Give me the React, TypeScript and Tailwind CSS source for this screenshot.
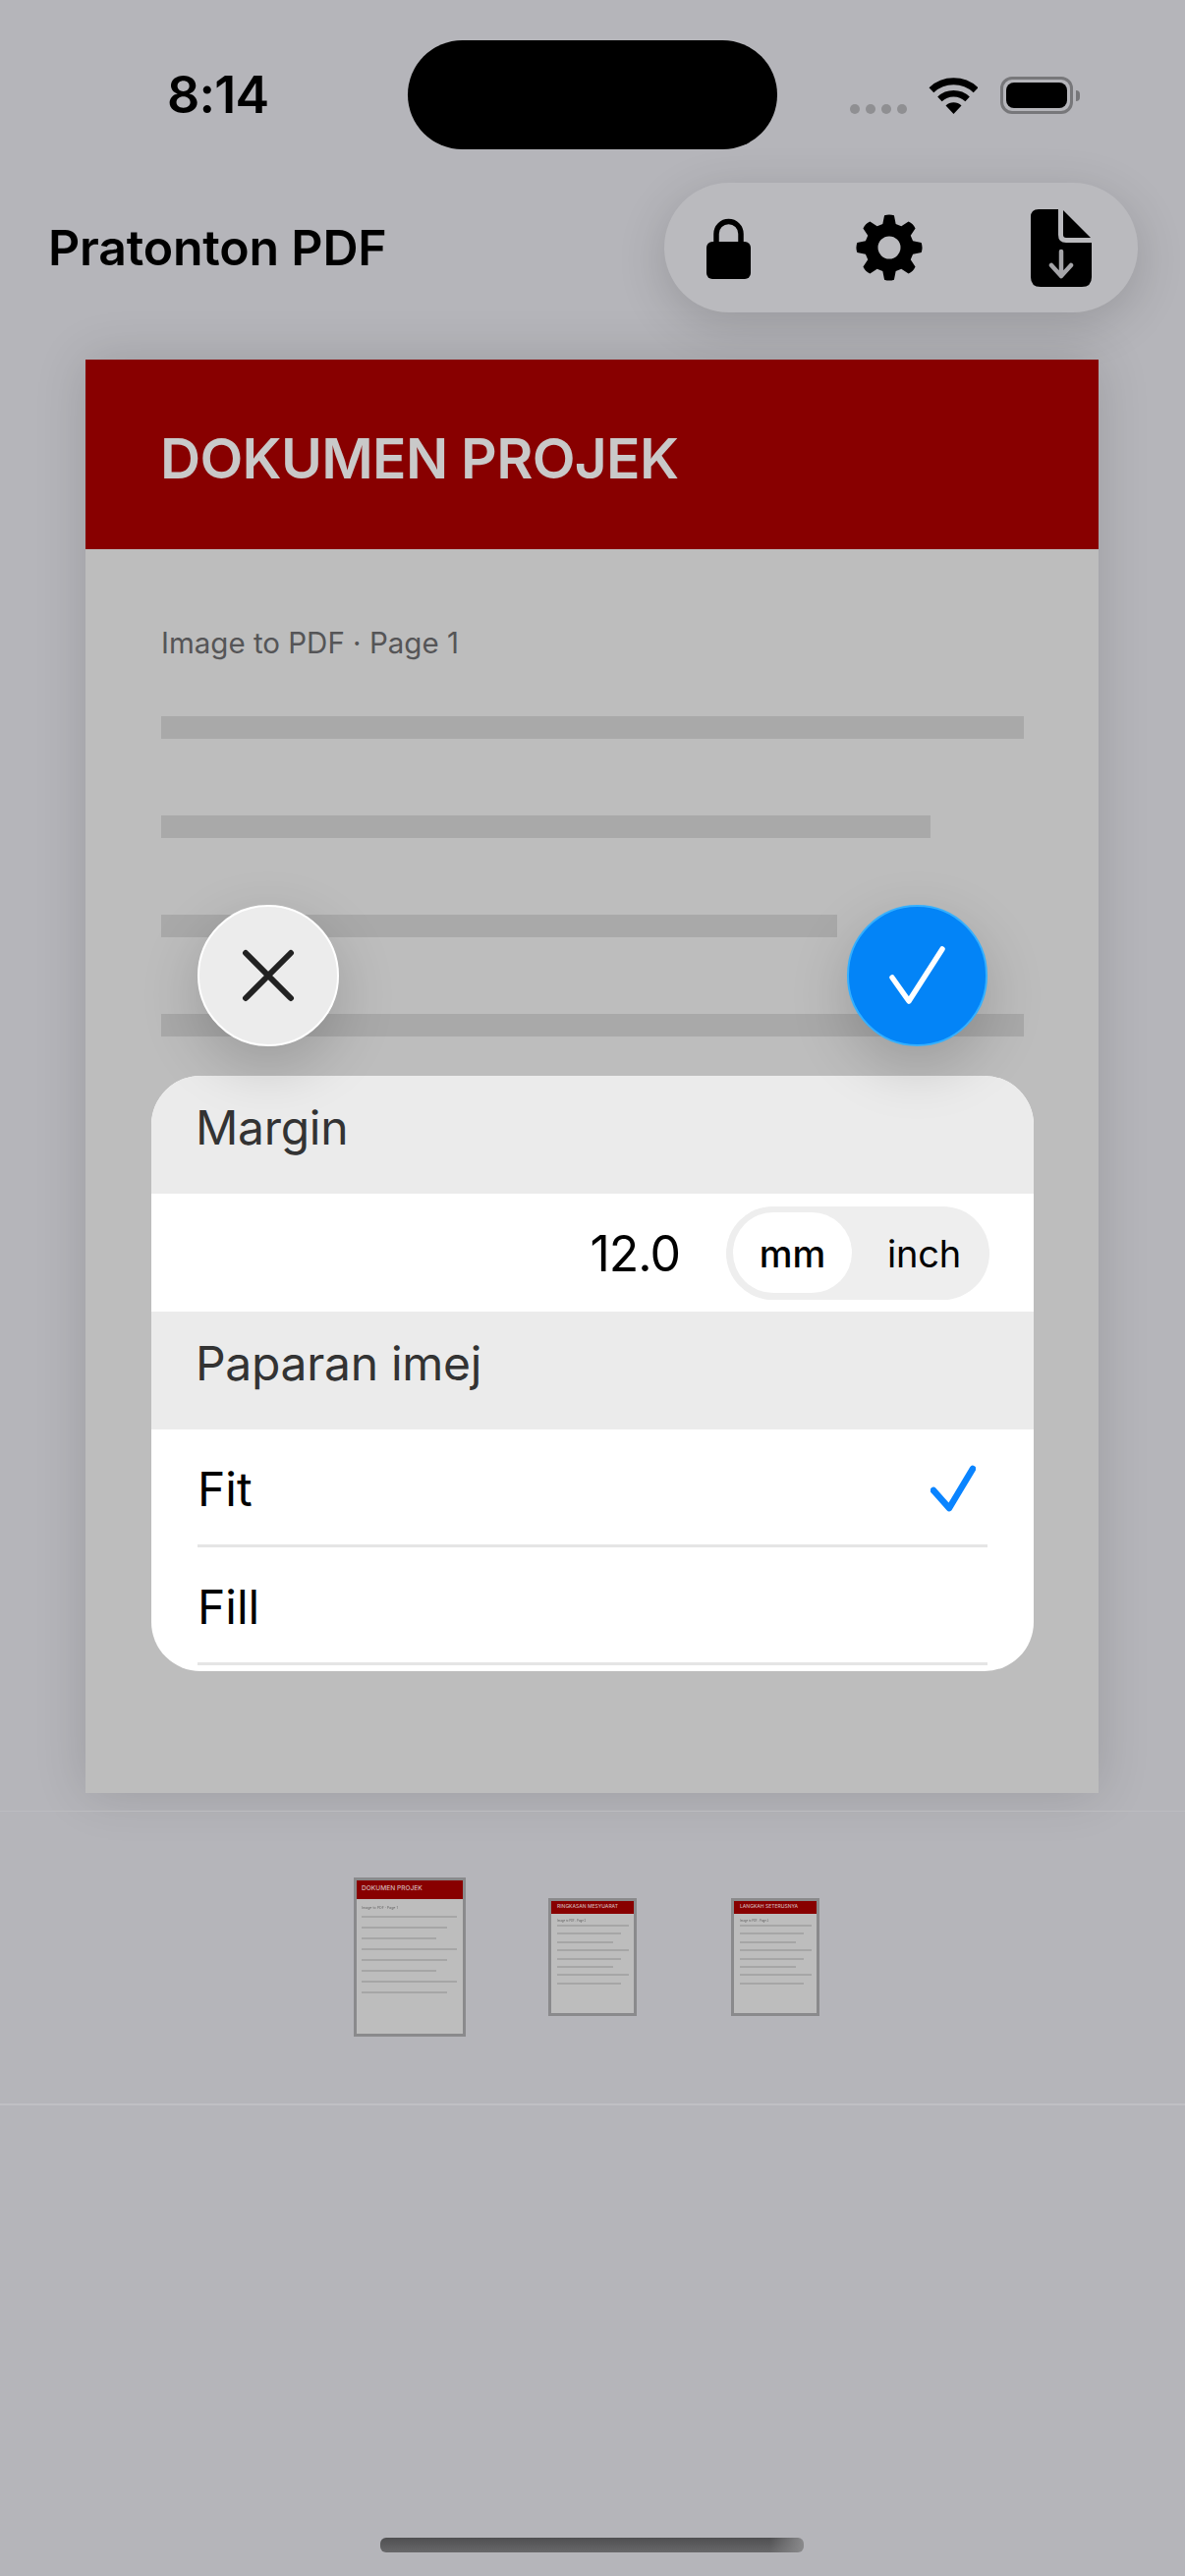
const gearPath = (() => {
  const cx = 34, cy = 34, teeth = 8;
  const pts: string[] = [];
  for (let i = 0; i < teeth; i++) {
    const a = (i * 2 * Math.PI) / teeth - Math.PI / 2;
    const p = (r: number, d: number) => {
      const t = a + d;
      return `${(cx + r * Math.cos(t)).toFixed(2)} ${(cy + r * Math.sin(t)).toFixed(2)}`;
    };
    pts.push(`${i === 0 ? "M" : "L"}${p(25, -0.27)}`, `L${p(33, -0.15)}`, `Q${p(34.5, 0)} ${p(33, 0.15)}`, `L${p(25, 0.27)}`);
  }
  return pts.join(" ") + " Z M34 22.5 A11.5 11.5 0 1 0 34 45.5 A11.5 11.5 0 1 0 34 22.5 Z";
})();

function Thumb({ outer, title, label, big }: { outer: string; title: string; label: string; big: boolean }) {
  const widths = big ? [97, 87, 76, 97, 87, 76, 97, 87] : [73, 65, 57, 73, 65, 57, 73, 65];
  return (
    <div className={`${outer} shrink-0 border-[3px] border-[#8a8a8c] bg-[#bdbdbd] flex flex-col`}>
      <div className={big ? "h-[19px] bg-[#880000] flex items-center pl-[5px]" : "h-[13px] bg-[#880000] flex items-center pl-[6px]"}>
        <span className={big ? "text-[6.6px] font-medium text-[#d0b4b4] whitespace-nowrap" : "text-[5px] font-medium text-[#d0b4b4] whitespace-nowrap"}>{title}</span>
      </div>
      <div className={big ? "pl-[5px] pt-[7px] flex flex-col blur-[0.4px]" : "pl-[6px] pt-[5px] flex flex-col blur-[0.4px]"}>
        <span className={big ? "text-[3.6px] leading-[5px] text-[#666] mb-[5px] whitespace-nowrap" : "text-[2.8px] leading-[4px] text-[#666] mb-[2.5px] whitespace-nowrap"}>{label}</span>
        <div className={big ? "flex flex-col gap-[9px]" : "flex flex-col gap-[6.4px]"}>
          {widths.map((w, i) => (
            <div key={i} className="h-[2px] bg-[#a6a6a6]" style={{ width: w }} />
          ))}
        </div>
      </div>
    </div>
  );
}

export default function App() {
  return (
    <div className="relative w-[1206px] h-[2622px] overflow-hidden bg-[#b5b5ba] font-['Inter',sans-serif] text-black flex flex-col">
      {/* status bar */}
      <div className="h-[186px] shrink-0 flex items-start">
        <span className="ml-[170px] mt-[66px] w-[245px] text-[52px] leading-[62px] font-semibold tracking-[-0.8px]">8:14</span>
        <div className="mt-[41px] w-[376px] h-[111px] rounded-[56px] bg-black" />
        <div className="ml-[74px] mt-[78px] flex items-start">
          <div className="mt-[28px] flex gap-[6px]">
            <div className="w-[10px] h-[10px] rounded-full bg-[#8f8f92]" />
            <div className="w-[10px] h-[10px] rounded-full bg-[#8f8f92]" />
            <div className="w-[10px] h-[10px] rounded-full bg-[#8f8f92]" />
            <div className="w-[10px] h-[10px] rounded-full bg-[#8f8f92]" />
          </div>
          <svg className="ml-[22px]" width="50" height="38" viewBox="0 0 50 38">
            <path d="M2.9 13.7 A33.2 33.2 0 0 1 48.1 13.7" fill="none" stroke="#000" strokeWidth="7" />
            <path d="M11.4 22.9 A20.7 20.7 0 0 1 39.6 22.9" fill="none" stroke="#000" strokeWidth="6.5" />
            <path d="M25.5 38 L17.5 29.4 A11.7 11.7 0 0 1 33.5 29.4 Z" fill="#000" />
          </svg>
          <div className="ml-[23px] w-[74px] h-[38px] rounded-[12px] border-[3px] border-[#77777a] p-[3px] relative">
            <div className="w-full h-full rounded-[8px] bg-black" />
            <div className="absolute -right-[10px] top-[11px] w-[4px] h-[11px] rounded-r-[4px] bg-[#77777a]" />
          </div>
        </div>
      </div>

      {/* header */}
      <div className="h-[132px] shrink-0 flex items-center justify-between pl-[49px] pr-[48px]">
        <span className="text-[50px] font-semibold tracking-[-0.2px]">Pratonton PDF</span>
        <div className="w-[482px] h-[132px] rounded-[66px] bg-[#bababe] shadow-[0_12px_50px_rgba(0,0,0,0.16)] flex items-center pl-[43px]">
          <svg width="45" height="64" viewBox="0 0 45 64">
            <path d="M10 28 V18 A12.5 12.5 0 0 1 35 18 V28" fill="none" stroke="#000" strokeWidth="5.5" />
            <rect x="0" y="26" width="45" height="38" rx="6" fill="#000" />
          </svg>
          <svg className="ml-[107px]" width="68" height="68" viewBox="0 0 68 68">
            <path d={gearPath} fill="#000" fillRule="evenodd" />
          </svg>
          <svg className="ml-[110px]" width="62" height="79" viewBox="0 0 62 79">
            <path d="M8 0 H28 V26 Q28 34 36 34 H62 V69 Q62 79 52 79 H10 Q0 79 0 69 V8 Q0 0 8 0 Z" fill="#000" />
            <path d="M33 1 L61 29 H36 Q33 29 33 26 Z" fill="#000" />
            <path d="M31 43 V68 M21 57 L31 68 L41 57" fill="none" stroke="#a5a5a9" strokeWidth="4.5" strokeLinecap="round" strokeLinejoin="round" />
          </svg>
        </div>
      </div>

      {/* page */}
      <div className="mt-[48px] ml-[87px] w-[1031px] h-[1459px] shrink-0 bg-[#bdbdbd] shadow-[0_0_50px_rgba(0,0,0,0.14)]">
        <div className="h-[193px] bg-[#880000] flex items-center pl-[76px] pt-[8px]">
          <span className="text-[57px] font-semibold tracking-[-0.7px] text-[#c9c9c9]">DOKUMEN PROJEK</span>
        </div>
        <div className="pl-[77px] pt-[75px] flex flex-col">
          <span className="text-[29.5px] leading-[40px] text-[#555557]">Image to PDF · Page 1</span>
          <div className="mt-[55px] flex flex-col gap-[78px]">
            <div className="w-[878px] h-[23px] bg-[#a9a9a9]" />
            <div className="w-[783px] h-[23px] bg-[#a9a9a9]" />
            <div className="w-[688px] h-[23px] bg-[#a9a9a9]" />
            <div className="w-[878px] h-[23px] bg-[#a9a9a9]" />
          </div>
        </div>
      </div>

      {/* thumbnails */}
      <div className="mt-[18px] h-[300px] shrink-0 border-t border-b-2 border-t-[#bcbcc0] border-b-[#c0c0c4] flex items-center pl-[360px] pb-[2px]">
        <Thumb outer="w-[114px] h-[162px]" title="DOKUMEN PROJEK" label="Image to PDF · Page 1" big />
        <div className="w-[84px] shrink-0" />
        <Thumb outer="w-[90px] h-[120px]" title="RINGKASAN MESYUARAT" label="Image to PDF · Page 2" big={false} />
        <div className="w-[96px] shrink-0" />
        <Thumb outer="w-[90px] h-[120px]" title="LANGKAH SETERUSNYA" label="Image to PDF · Page 3" big={false} />
      </div>

      {/* home indicator */}
      <div className="mt-[440px] ml-[387px] w-[431px] h-[15px] rounded-[6px] bg-[linear-gradient(90deg,#55555700_92%,#8a8a8c_100%),linear-gradient(180deg,#4f4f51,#68686a)]" />

      {/* sheet */}
      <div className="absolute left-[154px] top-[1095px] w-[898px] h-[606px] rounded-[50px] overflow-hidden bg-white">
        <div className="h-[120px] bg-[#ebebeb] pl-[45px] pt-[24px] text-[48px] leading-[58px] text-[#333] tracking-[-0.3px]">Margin</div>
        <div className="h-[120px] flex items-center justify-end pr-[45px]">
          <span className="text-[50px] tracking-[-1px] mr-[47px] pt-[2px]">12.0</span>
          <div className="w-[268px] h-[95px] rounded-full bg-[#eeeeee] flex items-center pl-[7px]">
            <div className="w-[121px] h-[82px] rounded-full bg-white flex items-center justify-center text-[38px] font-medium pt-[2px]">mm</div>
            <span className="ml-[36px] text-[38px] tracking-[-0.2px] pt-[2px]">inch</span>
          </div>
        </div>
        <div className="h-[120px] bg-[#ebebeb] pl-[45px] pt-[24px] text-[48px] leading-[58px] text-[#333] tracking-[-0.3px]">Paparan imej</div>
        <div className="h-[120px] ml-[47px] mr-[47px] border-b-[3px] border-[#e5e5e5] flex items-center justify-between text-[48px]">
          <span className="pt-[4px]">Fit</span>
          <svg className="mr-[12px] mt-[5px]" width="46" height="50" viewBox="0 0 46 50">
            <path d="M3 26 L19 44 L43 4" fill="none" stroke="#0a84ff" strokeWidth="6.5" strokeLinecap="round" strokeLinejoin="round" />
          </svg>
        </div>
        <div className="h-[120px] ml-[47px] mr-[47px] border-b-[3px] border-[#e5e5e5] flex items-center text-[48px]">
          <span className="pt-[4px]">Fill</span>
        </div>
      </div>

      {/* floating buttons */}
      <div className="absolute left-[201px] top-[921px] w-[144px] h-[144px] rounded-full bg-[#ececec] border-2 border-white shadow-[0_20px_60px_rgba(0,0,0,0.18)] flex items-center justify-center">
        <svg width="56" height="56" viewBox="0 0 56 56">
          <path d="M5 5 L51 51 M51 5 L5 51" fill="none" stroke="#222" strokeWidth="6" strokeLinecap="round" />
        </svg>
      </div>
      <div className="absolute left-[862px] top-[921px] w-[143px] h-[144px] rounded-full bg-[#0384f7] border-2 border-[#35b0ff] shadow-[0_20px_60px_rgba(0,0,0,0.18)] flex items-center justify-center">
        <svg width="58" height="60" viewBox="0 0 58 60">
          <path d="M3 32 L20 56 L54 3" fill="none" stroke="#fff" strokeWidth="5.5" strokeLinecap="round" strokeLinejoin="round" />
        </svg>
      </div>
    </div>
  );
}
